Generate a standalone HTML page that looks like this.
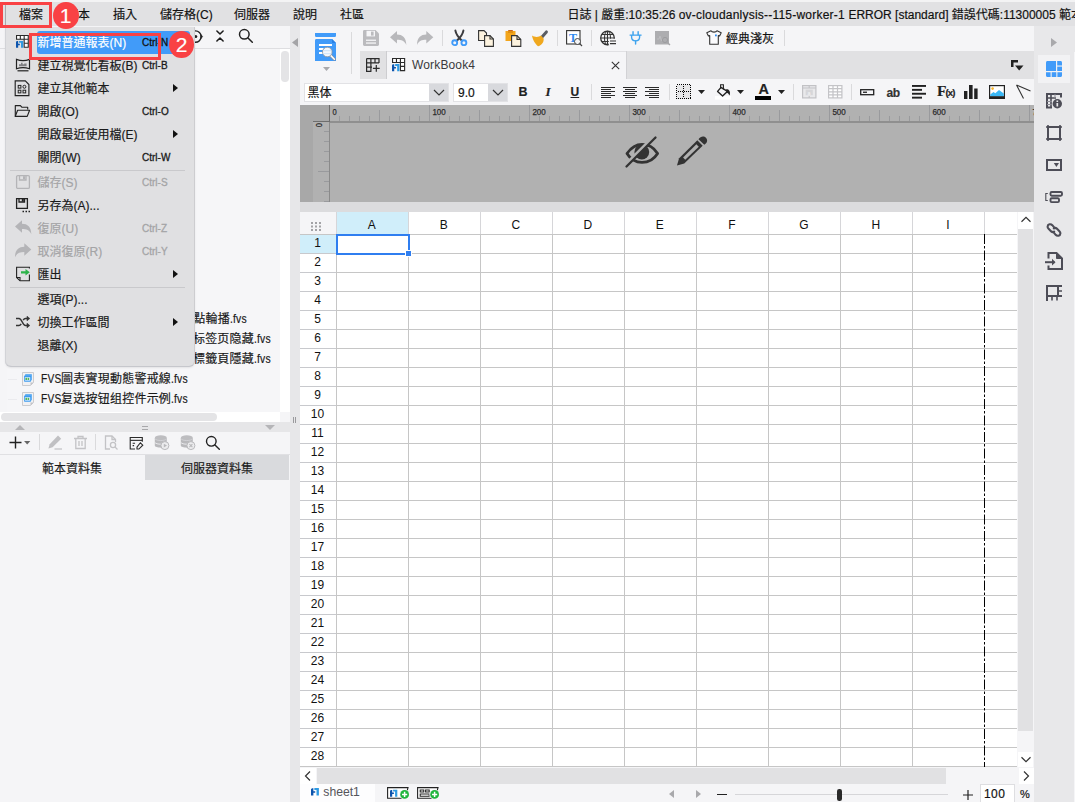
<!DOCTYPE html>
<html lang="zh-Hant">
<head>
<meta charset="utf-8">
<title>FineReport Designer</title>
<style>
*{box-sizing:border-box;margin:0;padding:0}
html,body{width:1075px;height:802px;overflow:hidden;background:#f5f5f7}
body{position:relative;font-family:"Liberation Sans","Noto Sans CJK TC",sans-serif;font-size:12px;color:#1a1a1a}
.a{position:absolute}
.t{position:absolute;white-space:nowrap;line-height:16px;height:16px;-webkit-text-stroke:.18px}
svg{position:absolute;overflow:visible}
/* menubar */
#topstrip{left:0;top:0;width:1075px;height:2px;background:#f3f3f4}
#menubar{left:0;top:2px;width:1075px;height:24px;background:#e1e1e3}
#menubar .t{top:4.5px;color:#111}
/* left panel */
#left{left:0;top:26px;width:290px;height:776px;background:#f5f5f7}
#gutter{left:290px;top:26px;width:10px;height:776px;background:#e7e7e9}
/* menu */
#menu{left:5px;top:27px;width:190px;height:340px;background:#e0e0e2;border-radius:0 0 6px 6px;border-right:1px solid #cdcdd0;border-bottom:1px solid #c6c7cc;box-shadow:inset 1px 0 0 #d2d3d7,0 1px 2px rgba(0,0,0,.08)}
.mi{position:absolute;left:0;width:190px;height:23px}
.mi .t{left:32.5px;top:4px}
.mi .k{left:137px;font-size:10px;top:4px;-webkit-text-stroke:.3px}
.mi .ar{position:absolute;left:168px;top:7px;width:0;height:0;border-left:5px solid #111;border-top:4.5px solid transparent;border-bottom:4.5px solid transparent}
.mi.dis{color:#a4a4a6}
.sep{position:absolute;left:5px;width:175px;height:1px;background:#c9c9cc}
/* main */
#main{left:300px;top:26px;width:734px;height:776px;background:#f5f5f7}
#side{left:1034px;top:26px;width:41px;height:776px;background:#e8e8ea}
.n,.n2{display:inline-block;transform-origin:0 50%}.n{transform:scaleX(.85);margin-right:-3.4px}.n2{transform:scaleX(.86);margin-right:-2.6px}
.vs{position:absolute;width:1px;background:#dadadc}
</style>
</head>
<body>
<div class="a" id="topstrip"></div>
<div class="a" id="menubar">
  <i class="a" style="left:5px;top:2px;width:1px;height:22px;background:#a9a9ac"></i><span class="t" style="left:19px">檔案</span>
  <span class="t" style="left:66px">範本</span>
  <span class="t" style="left:113px">插入</span>
  <span class="t" style="left:160px">儲存格(C)</span>
  <span class="t" style="left:234px">伺服器</span>
  <span class="t" style="left:293px">說明</span>
  <span class="t" style="left:340px">社區</span>
  <span class="t" style="left:567.5px">日誌 | 嚴重:10:35:26 <span style="letter-spacing:.22px">ov-cloudanlysis--115-worker-1 </span>ERROR [standard] 錯誤代碼:11300005 範本</span>
</div>

<div class="a" id="left">
  <!-- top toolbar (mostly hidden beneath menu) -->
  <div class="a" style="left:0;top:22px;width:290px;height:1px;background:#dedee1"></div>
  <svg style="left:186px;top:3px" width="18" height="16" viewBox="0 0 18 16" fill="none" stroke="#222" stroke-width="1.4"><circle cx="9.4" cy="7.6" r="5.7"/><circle cx="9.8" cy="7.6" r="1.5" fill="#222" stroke="none"/><path d="M14.8 5.4L16.6 7.6L14.8 9.8Z" fill="#222" stroke-width=".6"/></svg>
  <svg style="left:215px;top:3px" width="10" height="14" viewBox="0 0 10 14" fill="none" stroke="#1c1c1c" stroke-width="1.55" stroke-linecap="round" stroke-linejoin="round"><path d="M1.9 2 L5 5 L8.1 2"/><path d="M1.9 12 L5 9 L8.1 12"/></svg>
  <svg style="left:238px;top:2px" width="16" height="16" viewBox="0 0 16 16" fill="none" stroke="#222" stroke-width="1.5" stroke-linecap="round"><circle cx="6.3" cy="6.3" r="4.8"/><path d="M10 10 L14.3 14.3"/></svg>
  <!-- tree area -->
  <div class="a" style="left:7px;top:23px;width:273px;height:363px;background:#f6f6f8"></div>
  <div class="a" style="left:280px;top:23px;width:10px;height:363px;background:#fff"></div>
  <div class="a" style="left:281.3px;top:24.5px;width:7.5px;height:31.5px;background:#e4e4e6;border-radius:3.7px"></div>
  <!-- tree rows -->
  <div class="t" style="right:43px;top:285px;letter-spacing:.22px"><span class="n">FVS</span>焦點輪播<span class="n2">.fvs</span></div>
  <div class="t" style="right:19px;top:305px;letter-spacing:.22px"><span class="n">FVS</span>标签页隐藏<span class="n2">.fvs</span></div>
  <div class="t" style="right:19px;top:325px;letter-spacing:.22px"><span class="n">FVS</span>標籤頁隱藏<span class="n2">.fvs</span></div>
  <svg style="left:22px;top:346px" width="12" height="14" viewBox="0 0 12 14"><path d="M.5 .5H11.5V10.5L8.5 13.5H.5Z" fill="#f1f1f3" stroke="#cbcbce"/><path d="M8.5 13.5V10.5H11.5Z" fill="#c4c4c7"/><rect x="3" y="2" width="7" height="6.5" rx=".8" fill="#67b1f3"/><rect x="2" y="3.6" width="7" height="6.2" rx=".8" fill="#3f9cf0"/><rect x="2.8" y="5.2" width="5.4" height="3.4" fill="#e4f1fc"/><rect x="3.4" y="5.8" width="1.6" height="2.2" fill="#4fb45f"/><rect x="5.6" y="5.8" width="1.6" height="2.2" fill="#4fb45f"/></svg>
  <div class="t" style="left:40.5px;top:345px;letter-spacing:.22px"><span class="n">FVS</span>圖表實現動態警戒線<span class="n2">.fvs</span></div>
  <svg style="left:22px;top:366px" width="12" height="14" viewBox="0 0 12 14"><path d="M.5 .5H11.5V10.5L8.5 13.5H.5Z" fill="#f1f1f3" stroke="#cbcbce"/><path d="M8.5 13.5V10.5H11.5Z" fill="#c4c4c7"/><rect x="3" y="2" width="7" height="6.5" rx=".8" fill="#67b1f3"/><rect x="2" y="3.6" width="7" height="6.2" rx=".8" fill="#3f9cf0"/><rect x="2.8" y="5.2" width="5.4" height="3.4" fill="#e4f1fc"/><rect x="3.4" y="5.8" width="1.6" height="2.2" fill="#4fb45f"/><rect x="5.6" y="5.8" width="1.6" height="2.2" fill="#4fb45f"/></svg>
  <div class="t" style="left:40.5px;top:365px;letter-spacing:.22px"><span class="n">FVS</span>复选按钮组控件示例<span class="n2">.fvs</span></div>
  <div class="a" style="left:8px;top:353px;width:9px;height:1px;background:#ebebee"></div><div class="a" style="left:8px;top:373px;width:9px;height:1px;background:#ebebee"></div>
  <!-- h scrollbar -->
  <div class="a" style="left:0;top:386px;width:280px;height:10px;background:#fff"></div>
  <div class="a" style="left:1px;top:387px;width:216px;height:8px;background:#e4e4e6;border-radius:4px"></div>
  <!-- splitter -->
  <div class="a" style="left:0;top:396px;width:290px;height:10px;background:#e6e6e8"></div>
  <svg style="left:15px;top:399px" width="10" height="5" viewBox="0 0 10 5"><path d="M0 5L5 0L10 5Z" fill="#b5b5b8"/></svg>
  <svg style="left:265px;top:399px" width="10" height="5" viewBox="0 0 10 5"><path d="M0 0L5 5L10 0Z" fill="#b5b5b8"/></svg>
  <div class="a" style="left:142px;top:400px;width:6px;height:1px;background:#a8a8ab"></div>
  <div class="a" style="left:142px;top:403px;width:6px;height:1px;background:#a8a8ab"></div>
  <!-- dataset toolbar -->
  <svg style="left:9px;top:410px" width="13" height="13" viewBox="0 0 13 13" stroke="#222" stroke-width="1.4"><path d="M6.5 .5V12.5M.5 6.5H12.5"/></svg>
  <svg style="left:24px;top:414.5px" width="6.4" height="3.6" viewBox="0 0 7 4"><path d="M0 0H7L3.5 4Z" fill="#666"/></svg>
  <div class="vs" style="left:39px;top:408px;height:16px"></div>
  <svg style="left:48px;top:409px" width="15" height="15" viewBox="0 0 15 15" fill="#c0c0c3"><path d="M10 .5 L13.2 3.7 L4.6 12.3 L.4 13.6 L1.7 9.2Z"/><rect x="6.5" y="13.4" width="7.5" height="1.2"/></svg>
  <svg style="left:73px;top:409px" width="15" height="15" viewBox="0 0 15 15" fill="none" stroke="#c3c3c6" stroke-width="1.3"><path d="M1 3.5H14M5 3.5V1.5H10V3.5M2.8 3.5V13.5H12.2V3.5M6 6V11M9 6V11"/></svg>
  <div class="vs" style="left:95px;top:408px;height:16px"></div>
  <svg style="left:104px;top:409px" width="15" height="15" viewBox="0 0 15 15" fill="none" stroke="#c3c3c6" stroke-width="1.3"><path d="M11.5 7V4.5L8 1H1.5V14H6"/><path d="M8 1V4.5H11.5"/><circle cx="9" cy="10" r="2.6"/><path d="M11 12L13.5 14.5"/></svg>
  <svg style="left:129px;top:409.5px" width="15" height="14.5" viewBox="0 0 15 15" fill="none" stroke="#2a2a2a" stroke-width="1.15"><path d="M13.5 6V1.5H1V13.5H6"/><path d="M1 4.5H13.5"/><path d="M3.5 7.5H6M3.5 10H5"/><path d="M8 11.5 L11.5 7 L14 9.5 L10 13.5H8Z"/></svg>
  <svg style="left:154px;top:409px" width="16" height="16" viewBox="0 0 16 16"><path d="M.8 3V10.6C.8 13.4 12.8 13.4 12.8 10.6V3Z" fill="#b9b9bc"/><ellipse cx="6.8" cy="3" rx="6" ry="2.7" fill="#bdbdc0"/><path d="M.8 3.6C2.4 6.2 11.2 6.2 12.8 3.6" stroke="#d6d6d9" stroke-width=".8" fill="none"/><path d="M.8 7.4C2.4 9.8 11.2 9.8 12.8 7.4" stroke="#ededf0" stroke-width=".9" fill="none"/><circle cx="10.9" cy="10.6" r="4" fill="#ececee" stroke="#b9b9bc" stroke-width="1"/><path d="M9.8 8.7L13 10.6L9.8 12.5Z" fill="#b9b9bc"/></svg>
  <svg style="left:180px;top:409px" width="16" height="16" viewBox="0 0 16 16"><path d="M.8 3V10.6C.8 13.4 12.8 13.4 12.8 10.6V3Z" fill="#b9b9bc"/><ellipse cx="6.8" cy="3" rx="6" ry="2.7" fill="#bdbdc0"/><path d="M.8 3.6C2.4 6.2 11.2 6.2 12.8 3.6" stroke="#d6d6d9" stroke-width=".8" fill="none"/><path d="M.8 7.4C2.4 9.8 11.2 9.8 12.8 7.4" stroke="#ededf0" stroke-width=".9" fill="none"/><circle cx="10.9" cy="10.6" r="4" fill="#ececee" stroke="#b9b9bc" stroke-width="1"/><path d="M9.4 9.1L12.4 12.1M12.4 9.1L9.4 12.1" stroke="#b9b9bc" stroke-width="1.1"/></svg>
  <svg style="left:205px;top:409px" width="16" height="16" viewBox="0 0 16 16" fill="none" stroke="#222" stroke-width="1.4" stroke-linecap="round"><circle cx="6.3" cy="6.3" r="4.8"/><path d="M10 10 L14.3 14.3"/></svg>
  <div class="a" style="left:0;top:428px;width:290px;height:1px;background:#e0e0e3"></div>
  <!-- tabs -->
  <div class="a" style="left:145px;top:429px;width:144px;height:25px;background:#d9dadd"></div>
  <div class="t" style="left:42px;top:435px">範本資料集</div>
  <div class="t" style="left:181px;top:435px">伺服器資料集</div>
</div>
<div class="a" id="gutter">
  <svg style="left:2px;top:12px" width="6" height="9" viewBox="0 0 6 9"><path d="M6 0V9L0 4.5Z" fill="#a4a4a7"/></svg>
  <div class="a" style="left:3px;top:391px;width:1px;height:6px;background:#9a9a9d"></div>
  <div class="a" style="left:5px;top:391px;width:1px;height:6px;background:#9a9a9d"></div>
</div>
<div class="a" id="main">
<!--M1-->
<svg style="left:15px;top:7px" width="22" height="29" viewBox="0 0 22 29" ><path d="M0 0H21V2.4C21 3.4 20.3 4 19.4 4H1.6C.7 4 0 3.4 0 2.4Z" fill="#419bf9"/><path d="M1.4 6H17L21 10V28H0V7.4C0 6.6 .6 6 1.4 6Z" fill="#419bf9"/><path d="M17 6V10H21Z" fill="#2a82e6"/><rect x="4" y="11" width="13" height="2" fill="#fff"/><rect x="4" y="15" width="4.5" height="2" fill="#fff"/><rect x="4" y="19" width="4" height="2" fill="#fff"/><path d="M15.6 22.4L19.4 26.2" stroke="#909095" stroke-width="2.8" stroke-linecap="round"/><path d="M15.6 22.4L19.4 26.2" stroke="#fff" stroke-width="1.5" stroke-linecap="round"/><circle cx="12.3" cy="19" r="4.8" fill="#f4f8fd" stroke="#8f9399" stroke-width=".8"/><path d="M8.3 17.6H16.3M8.3 20.6H16.3" stroke="#d4e6f9" stroke-width="1.3"/></svg>
<svg style="left:23px;top:41px" width="7" height="4" viewBox="0 0 7 4" ><path d="M0 0H7L3.5 4Z" fill="#a9a9ac"/></svg>
<div class="vs" style="left:51px;top:6px;height:42px"></div>
<svg style="left:63px;top:4px" width="16" height="16" viewBox="0 0 16 16" ><path d="M0 1.4C0 .6 .6 0 1.4 0H12.5L16 3.5V14.6C16 15.4 15.4 16 14.6 16H1.4C.6 16 0 15.4 0 14.6Z" fill="#bbbbbe"/><rect x="3.5" y=".8" width="8.5" height="5.6" fill="#f5f5f7"/><rect x="8" y="1.6" width="2.6" height="4" fill="#bbbbbe"/><rect x="3" y="9.6" width="10" height="1.3" fill="#f5f5f7"/><rect x="3" y="12.4" width="10" height="1.3" fill="#f5f5f7"/></svg>
<svg style="left:90px;top:4.5px" width="16.5" height="14" viewBox="0 0 16.5 14" ><path d="M7 0V3.6C12.5 3.6 16.3 6.8 16.3 14C14.6 10 11.5 8.8 7 8.8V12.6L0 6.3Z" fill="#b8b8bb"/></svg>
<svg style="left:116.5px;top:4.5px" width="16.5" height="14" viewBox="0 0 16.5 14" ><path d="M9.3 0V3.6C3.8 3.6 0 6.8 0 14C1.7 10 4.8 8.8 9.3 8.8V12.6L16.3 6.3Z" fill="#b8b8bb"/></svg>
<div class="vs" style="left:142px;top:4px;height:16px"></div>
<svg style="left:151px;top:4px" width="17" height="16.5" viewBox="0 0 17 16.5" ><path d="M4.4 .6C5 4 7.5 7.5 10.8 10.6M12.4 .6C11.8 4 9.3 7.5 6 10.6" stroke="#3c3c3f" stroke-width="2" fill="none" stroke-linecap="round"/><circle cx="3.7" cy="12.7" r="2.45" fill="none" stroke="#419bf9" stroke-width="1.9"/><circle cx="12.9" cy="12.7" r="2.45" fill="none" stroke="#419bf9" stroke-width="1.9"/></svg>
<svg style="left:178px;top:4px" width="16" height="17" viewBox="0 0 16 17" ><path d="M.6 .6H6L8.5 3V10.5H.6Z" fill="#fdf3df" stroke="#333" stroke-width="1.1"/><path d="M6.6 5.6H12L15.4 9V16.4H6.6Z" fill="#fdf3df" stroke="#333" stroke-width="1.1"/><path d="M12 5.6V9H15.4" fill="none" stroke="#333" stroke-width="1.1"/></svg>
<svg style="left:205px;top:3px" width="17" height="18" viewBox="0 0 17 18" ><path d="M.5 2H10.5V12H.5Z" fill="#f3a51c"/><rect x="3.2" y="1" width="4.6" height="1.3" fill="#c8641a"/><rect x="3" y="2.6" width="5" height="1.2" fill="#d98b0c"/><path d="M6.6 6.6H12L15.8 10.4V17.4H6.6Z" fill="#fdf3df" stroke="#333" stroke-width="1.1"/><path d="M12 6.6V10.4H15.8" fill="none" stroke="#333" stroke-width="1.1"/></svg>
<svg style="left:232px;top:4px" width="17" height="17" viewBox="0 0 17 17" ><path d="M10 7L14.4 1.9" stroke="#5a5d63" stroke-width="3" stroke-linecap="round"/><path d="M0 5.5C3 7.6 7 7.2 9 5.6L11.6 8.4C12.2 12 9.2 15.6 6 16.2C3 14 .6 9.2 0 5.5Z" fill="#f0a81e"/></svg>
<div class="vs" style="left:257px;top:4px;height:16px"></div>
<svg style="left:266px;top:4px" width="17" height="17" viewBox="0 0 17 17" ><rect x=".6" y=".6" width="13.4" height="13.4" fill="#fff" stroke="#333" stroke-width="1.1"/><text x="3" y="11.5" font-family="Liberation Serif,serif" font-size="12" font-weight="bold" fill="#2f8bf0">T</text><circle cx="11.5" cy="11.5" r="3" fill="#f5f5f7" stroke="#444" stroke-width="1"/><path d="M13.7 13.7L16 16" stroke="#444" stroke-width="1.2"/></svg>
<div class="vs" style="left:291px;top:4px;height:16px"></div>
<svg style="left:300px;top:4px" width="17" height="16" viewBox="0 0 17 16" ><circle cx="7.5" cy="8" r="6.8" fill="none" stroke="#333" stroke-width="1.3"/><ellipse cx="7.5" cy="8" rx="3" ry="6.8" fill="none" stroke="#333" stroke-width="1.1"/><path d="M.8 8H14.2M1.8 4.5H13.2M1.8 11.5H9M7.5 1.2V14.8" stroke="#333" stroke-width="1.1"/><rect x="8.8" y="8.8" width="8" height="7" fill="#f5f5f7"/><path d="M10 11H16M10 13.6H16" stroke="#333" stroke-width="1.2"/></svg>
<svg style="left:328.5px;top:5.3px" width="13.2" height="13.6" viewBox="0 0 15 16" ><path d="M4.5 .8V4.5M10.5 .8V4.5" stroke="#3ea3ee" stroke-width="1.7" stroke-linecap="round"/><path d="M1 4.8H14M2.8 5V7.5C2.8 13 12.2 13 12.2 7.5V5" fill="none" stroke="#3ea3ee" stroke-width="1.6" stroke-linecap="round"/><path d="M7.5 11.8V15.3" stroke="#3ea3ee" stroke-width="1.7" stroke-linecap="round"/></svg>
<svg style="left:355px;top:5px" width="16" height="15" viewBox="0 0 16 15" ><rect x="0" y="0" width="14" height="13.5" fill="#adadb0"/><path d="M2 8H4L5 5L6.5 10L7.5 7" stroke="#bdbdc0" stroke-width="1" fill="none"/><circle cx="10" cy="9" r="2.6" fill="none" stroke="#9c9c9f" stroke-width="1"/><path d="M12 11L15 14" stroke="#a6a6a9" stroke-width="1.2"/></svg>
<svg style="left:406px;top:4px" width="16" height="15" viewBox="0 0 16 15" ><path d="M5 .8C6 2.6 10 2.6 11 .8L15.2 2.8L13.6 6L12.3 5.5V14.2H3.7V5.5L2.4 6L.8 2.8Z" fill="#fafafc" stroke="#333" stroke-width="1.1" stroke-linejoin="round"/><rect x="9" y="4.5" width="1.8" height="1.8" fill="#2f8bf0"/></svg>
<div class="t" style="left:426px;top:4.5px;color:#111">經典淺灰</div>
<div class="vs" style="left:484px;top:4px;height:16px"></div>
<div class="a" style="left:60px;top:25px;width:674px;height:28px;background:#e1e1e3"></div>
<div class="a" style="left:87px;top:25px;width:239px;height:28px;background:#f5f5f7"></div>
<div class="a" style="left:326px;top:25px;width:1px;height:28px;background:#d2d2d5"></div>
<div class="a" style="left:86px;top:25px;width:1px;height:28px;background:#cdcdd0"></div>
<div class="a" style="left:87px;top:25px;width:239px;height:1px;background:#e0e0e3"></div>
<svg style="left:66px;top:32px" width="15" height="15" viewBox="0 0 15 15" ><path d="M.6 .6H13V5M.6 .6V13.4H5.4M.6 4.9H13M.6 9.2H5.2M4.9 .6V13.4M9 .6V5.2M4.9 9.2H6" fill="none" stroke="#2a2a2a" stroke-width="1.2"/><path d="M10.3 7V13.8M6.9 10.4H13.7" stroke="#2a2a2a" stroke-width="1.2"/></svg>
<svg style="left:92px;top:32.2px" width="13.2" height="13.2" viewBox="0 0 13 13" ><path d="M.55 .55H12.45V12.45H8.3V4.4H.55Z" fill="#fff" stroke="#2a2a2a" stroke-width="1.1"/><path d="M4.4 .55V4.4M8.3 .55V4.4M8.3 4.4H12.45M8.3 8.3H12.45" fill="none" stroke="#2a2a2a" stroke-width="1.1"/><path d="M0 7.6C0 6.7 .7 6.2 1.6 6.2H2.2V8.9H3.9V10.3H2.2V13H0Z" fill="#0d54ad"/><path d="M3.1 6H7.3V13H5.1V7.9H3.1Z" fill="#2e9ae2"/></svg>
<div class="t" style="left:112px;top:31px;color:#3a3a3d;font-size:12px;letter-spacing:.15px;-webkit-text-stroke:0">WorkBook4</div>
<svg style="left:310.7px;top:34.5px" width="9" height="9" viewBox="0 0 9 9" ><path d="M.8 .8L8.2 8.2M8.2 .8L.8 8.2" stroke="#333" stroke-width="1.1"/></svg>
<svg style="left:711px;top:34px" width="13" height="11" viewBox="0 0 13 11" ><path d="M0 0H7V2.5H2.5V7H0Z" fill="#222"/><path d="M4 5.5H12.5L8.2 10.5Z" fill="#222"/></svg>
<div class="a" style="left:4px;top:56.6px;width:145px;height:19px;background:#d8d9dd;border:1px solid #e2e2e5"></div>
<div class="a" style="left:5px;top:57.6px;width:124px;height:17px;background:#fff"></div>
<div class="t" style="left:7.5px;top:58.5px;color:#111">黑体</div>
<svg style="left:133px;top:63px" width="12" height="7" viewBox="0 0 12 7" ><path d="M1 1L6 6L11 1" fill="none" stroke="#333" stroke-width="1.2"/></svg>
<div class="a" style="left:153px;top:56.6px;width:55px;height:19px;background:#d8d9dd;border:1px solid #e2e2e5"></div>
<div class="a" style="left:154px;top:57.6px;width:34px;height:17px;background:#fff"></div>
<div class="t" style="left:158px;top:58.5px;color:#111">9.0</div>
<svg style="left:192px;top:63px" width="12" height="7" viewBox="0 0 12 7" ><path d="M1 1L6 6L11 1" fill="none" stroke="#333" stroke-width="1.2"/></svg>
<div class="t" style="left:218.5px;top:58px;font-weight:bold;color:#222;font-size:12.5px">B</div>
<div class="t" style="left:245.5px;top:58px;font-style:italic;font-weight:bold;color:#222;font-family:Liberation Serif,serif;font-size:13px">I</div>
<div class="t" style="left:270.5px;top:57.5px;font-weight:bold;color:#222;text-decoration:underline;font-size:12px">U</div>
<div class="vs" style="left:291px;top:58px;height:16px"></div>
<svg style="left:301px;top:61px" width="14" height="11" viewBox="0 0 14 11" shape-rendering="crispEdges"><rect x="0" y="0" width="14" height="1" fill="#2a2a2a"/><rect x="0" y="2" width="10" height="1" fill="#2a2a2a"/><rect x="0" y="4" width="14" height="1" fill="#2a2a2a"/><rect x="0" y="6" width="10" height="1" fill="#2a2a2a"/><rect x="0" y="8" width="14" height="1" fill="#2a2a2a"/><rect x="0" y="10" width="10" height="1" fill="#2a2a2a"/></svg>
<svg style="left:323px;top:61px" width="14" height="11" viewBox="0 0 14 11" shape-rendering="crispEdges"><rect x="0" y="0" width="14" height="1" fill="#2a2a2a"/><rect x="2" y="2" width="10" height="1" fill="#2a2a2a"/><rect x="0" y="4" width="14" height="1" fill="#2a2a2a"/><rect x="2" y="6" width="10" height="1" fill="#2a2a2a"/><rect x="0" y="8" width="14" height="1" fill="#2a2a2a"/><rect x="2" y="10" width="10" height="1" fill="#2a2a2a"/></svg>
<svg style="left:345px;top:61px" width="14" height="11" viewBox="0 0 14 11" shape-rendering="crispEdges"><rect x="0" y="0" width="14" height="1" fill="#2a2a2a"/><rect x="4" y="2" width="10" height="1" fill="#2a2a2a"/><rect x="0" y="4" width="14" height="1" fill="#2a2a2a"/><rect x="4" y="6" width="10" height="1" fill="#2a2a2a"/><rect x="0" y="8" width="14" height="1" fill="#2a2a2a"/><rect x="4" y="10" width="10" height="1" fill="#2a2a2a"/></svg>
<div class="vs" style="left:369px;top:58px;height:16px"></div>
<svg style="left:376px;top:58px" width="15" height="15" viewBox="0 0 15 15" shape-rendering="crispEdges"><rect x=".5" y=".5" width="14" height="14" fill="#e6e6e8" stroke="#000" stroke-width="1" stroke-dasharray="1 1"/><path d="M7.5 2V14M2 7.5H14" stroke="#000" stroke-width="1" stroke-dasharray="1 1"/></svg>
<svg style="left:398px;top:64px" width="7" height="4" viewBox="0 0 7 4" ><path d="M0 0H7L3.5 4Z" fill="#222"/></svg>
<svg style="left:415px;top:58px" width="17" height="16" viewBox="0 0 17 16" ><rect x="0" y="12" width="16" height="3.6" fill="#fff"/><path d="M6 3.4L12.4 7.4L7.6 12L2.6 7.4Z" fill="none" stroke="#222" stroke-width="1.4" stroke-linejoin="round"/><path d="M5.6 4.6V.8H8.4V5.4" fill="none" stroke="#222" stroke-width="1.1"/><path d="M11.2 5C14.4 5 15.8 8 14.6 11.6C13.6 9.6 12.8 8.8 11.6 8.4Z" fill="#222"/></svg>
<svg style="left:437px;top:64px" width="7" height="4" viewBox="0 0 7 4" ><path d="M0 0H7L3.5 4Z" fill="#222"/></svg>
<div class="t" style="left:458.4px;top:54.9px;font-weight:bold;font-size:14.4px;color:#222">A</div>
<div class="a" style="left:455px;top:70px;width:16px;height:4px;background:#000"></div>
<svg style="left:478px;top:64px" width="7" height="4" viewBox="0 0 7 4" ><path d="M0 0H7L3.5 4Z" fill="#222"/></svg>
<div class="vs" style="left:493px;top:58px;height:16px"></div>
<svg style="left:502px;top:59px" width="15" height="14" viewBox="0 0 15 14" ><rect x=".6" y=".6" width="13.3" height="12.3" fill="#e9e9eb" stroke="#c2c2c5" stroke-width="1.2"/><path d="M.6 3H14M7.2 .6V3M7.2 11V13" stroke="#c2c2c5" stroke-width="1.1"/><rect x="3.6" y="4.6" width="7.2" height="5.6" fill="#d6d6d9"/><text x="5.4" y="9.6" font-size="5.5" fill="#f5f5f7" font-family="Liberation Sans,sans-serif">a</text></svg>
<svg style="left:528px;top:59px" width="15" height="14" viewBox="0 0 15 14" ><rect x=".6" y=".6" width="13.3" height="12.3" fill="#fff" stroke="#c4c4c7" stroke-width="1.2"/><path d="M.6 3.7H14M.6 6.8H14M.6 9.9H14M5 .6V13M9.5 .6V13" fill="none" stroke="#c4c4c7" stroke-width="1.2"/></svg>
<div class="vs" style="left:551px;top:58px;height:16px"></div>
<svg style="left:560px;top:63px" width="15" height="7" viewBox="0 0 15 7" ><rect x=".7" y=".7" width="13" height="5" fill="none" stroke="#222" stroke-width="1.3"/><rect x="3" y="2.6" width="4" height="1.3" fill="#222"/></svg>
<div class="t" style="left:586.5px;top:59px;font-weight:bold;color:#333;font-size:12px;letter-spacing:-.3px">ab</div>
<svg style="left:612px;top:59.3px" width="14" height="14" viewBox="0 0 14 14" ><rect x="0" y="0" width="14" height="1.9" fill="#222"/><rect x="0" y="3.9" width="10" height="1.9" fill="#222"/><rect x="0" y="7.8" width="14" height="1.9" fill="#222"/><rect x="0" y="11.7" width="10" height="1.9" fill="#222"/></svg>
<div class="t" style="left:637px;top:56.8px;font-family:Liberation Serif,serif;font-size:15.5px;font-weight:bold;color:#222">F</div>
<div class="t" style="left:645.6px;top:58.8px;font-family:Liberation Sans,sans-serif;font-size:9.5px;font-weight:bold;color:#222;letter-spacing:-.9px">(x)</div>
<svg style="left:664px;top:59px" width="14" height="14" viewBox="0 0 14 14" ><rect x="0" y="6" width="3.4" height="8" fill="#222"/><rect x="5" y="0" width="3.6" height="14" fill="#222"/><rect x="10.2" y="3.5" width="3.4" height="10.5" fill="#222"/></svg>
<svg style="left:689px;top:59px" width="16" height="14" viewBox="0 0 16 14" ><rect x=".6" y=".6" width="14.8" height="12.8" fill="#fff" stroke="#222" stroke-width="1.2"/><path d="M1.2 11.4V9.5L4.5 7L6.3 8.2L10 5L14.8 8.6V11.4Z" fill="#3ab8f6"/><rect x=".6" y="11.2" width="14.8" height="2.4" fill="#222"/><circle cx="3.6" cy="3.6" r="1.3" fill="#f8b62c"/></svg>
<svg style="left:716px;top:58px" width="15" height="15" viewBox="0 0 15 15" ><path d="M.5 1L14.5 7M.5 1L7.5 14.5" stroke="#333" stroke-width="1.1" fill="none"/></svg>
<div class="a" style="left:0px;top:79px;width:734px;height:97px;background:#b1b1b1"></div>
<div class="a" style="left:0px;top:79px;width:13px;height:97px;background:#a8a8a8"></div>
<div class="a" style="left:0px;top:79px;width:30px;height:16px;background:#a8a8a8"></div>
<div class="a" style="left:13px;top:95px;width:17px;height:1px;background:#6e6e6e"></div>
<div class="a" style="left:30px;top:95px;width:704px;height:2px;background:#8f8f8f"></div>
<div class="a" style="left:29px;top:96px;width:1px;height:80px;background:#8a8a8a"></div>
<div class="a" style="left:29px;top:79px;width:1px;height:17px;background:#6e6e6e"></div>
<svg style="left:0px;top:79px" width="734" height="97" viewBox="0 0 734 97" ><rect x="39" y="11" width="1" height="5" fill="#999a9d"/><rect x="49" y="11" width="1" height="5" fill="#999a9d"/><rect x="59" y="11" width="1" height="5" fill="#999a9d"/><rect x="69" y="11" width="1" height="5" fill="#999a9d"/><rect x="79" y="5" width="1" height="11" fill="#999a9d"/><rect x="89" y="11" width="1" height="5" fill="#999a9d"/><rect x="99" y="11" width="1" height="5" fill="#999a9d"/><rect x="109" y="11" width="1" height="5" fill="#999a9d"/><rect x="119" y="11" width="1" height="5" fill="#999a9d"/><rect x="129" y="0" width="1" height="16" fill="#999a9d"/><rect x="139" y="11" width="1" height="5" fill="#999a9d"/><rect x="149" y="11" width="1" height="5" fill="#999a9d"/><rect x="159" y="11" width="1" height="5" fill="#999a9d"/><rect x="169" y="11" width="1" height="5" fill="#999a9d"/><rect x="179" y="5" width="1" height="11" fill="#999a9d"/><rect x="189" y="11" width="1" height="5" fill="#999a9d"/><rect x="199" y="11" width="1" height="5" fill="#999a9d"/><rect x="209" y="11" width="1" height="5" fill="#999a9d"/><rect x="219" y="11" width="1" height="5" fill="#999a9d"/><rect x="229" y="0" width="1" height="16" fill="#999a9d"/><rect x="239" y="11" width="1" height="5" fill="#999a9d"/><rect x="249" y="11" width="1" height="5" fill="#999a9d"/><rect x="259" y="11" width="1" height="5" fill="#999a9d"/><rect x="269" y="11" width="1" height="5" fill="#999a9d"/><rect x="279" y="5" width="1" height="11" fill="#999a9d"/><rect x="289" y="11" width="1" height="5" fill="#999a9d"/><rect x="299" y="11" width="1" height="5" fill="#999a9d"/><rect x="309" y="11" width="1" height="5" fill="#999a9d"/><rect x="319" y="11" width="1" height="5" fill="#999a9d"/><rect x="329" y="0" width="1" height="16" fill="#999a9d"/><rect x="339" y="11" width="1" height="5" fill="#999a9d"/><rect x="349" y="11" width="1" height="5" fill="#999a9d"/><rect x="359" y="11" width="1" height="5" fill="#999a9d"/><rect x="369" y="11" width="1" height="5" fill="#999a9d"/><rect x="379" y="5" width="1" height="11" fill="#999a9d"/><rect x="389" y="11" width="1" height="5" fill="#999a9d"/><rect x="399" y="11" width="1" height="5" fill="#999a9d"/><rect x="409" y="11" width="1" height="5" fill="#999a9d"/><rect x="419" y="11" width="1" height="5" fill="#999a9d"/><rect x="429" y="0" width="1" height="16" fill="#999a9d"/><rect x="439" y="11" width="1" height="5" fill="#999a9d"/><rect x="449" y="11" width="1" height="5" fill="#999a9d"/><rect x="459" y="11" width="1" height="5" fill="#999a9d"/><rect x="469" y="11" width="1" height="5" fill="#999a9d"/><rect x="479" y="5" width="1" height="11" fill="#999a9d"/><rect x="489" y="11" width="1" height="5" fill="#999a9d"/><rect x="499" y="11" width="1" height="5" fill="#999a9d"/><rect x="509" y="11" width="1" height="5" fill="#999a9d"/><rect x="519" y="11" width="1" height="5" fill="#999a9d"/><rect x="529" y="0" width="1" height="16" fill="#999a9d"/><rect x="539" y="11" width="1" height="5" fill="#999a9d"/><rect x="549" y="11" width="1" height="5" fill="#999a9d"/><rect x="559" y="11" width="1" height="5" fill="#999a9d"/><rect x="569" y="11" width="1" height="5" fill="#999a9d"/><rect x="579" y="5" width="1" height="11" fill="#999a9d"/><rect x="589" y="11" width="1" height="5" fill="#999a9d"/><rect x="599" y="11" width="1" height="5" fill="#999a9d"/><rect x="609" y="11" width="1" height="5" fill="#999a9d"/><rect x="619" y="11" width="1" height="5" fill="#999a9d"/><rect x="629" y="0" width="1" height="16" fill="#999a9d"/><rect x="639" y="11" width="1" height="5" fill="#999a9d"/><rect x="649" y="11" width="1" height="5" fill="#999a9d"/><rect x="659" y="11" width="1" height="5" fill="#999a9d"/><rect x="669" y="11" width="1" height="5" fill="#999a9d"/><rect x="679" y="5" width="1" height="11" fill="#999a9d"/><rect x="689" y="11" width="1" height="5" fill="#999a9d"/><rect x="699" y="11" width="1" height="5" fill="#999a9d"/><rect x="709" y="11" width="1" height="5" fill="#999a9d"/><rect x="719" y="11" width="1" height="5" fill="#999a9d"/><rect x="729" y="0" width="1" height="16" fill="#999a9d"/><rect x="24" y="26" width="5" height="1" fill="#999a9d"/><rect x="24" y="36" width="5" height="1" fill="#999a9d"/><rect x="24" y="46" width="5" height="1" fill="#999a9d"/><rect x="24" y="56" width="5" height="1" fill="#999a9d"/><rect x="18" y="66" width="11" height="1" fill="#999a9d"/><rect x="24" y="76" width="5" height="1" fill="#999a9d"/><rect x="24" y="86" width="5" height="1" fill="#999a9d"/><rect x="24" y="96" width="5" height="1" fill="#999a9d"/><text x="32.4" y="9.9" font-size="9" fill="#2a2a2a" stroke="#2a2a2a" stroke-width=".25" textLength="4.2" lengthAdjust="spacingAndGlyphs" font-family="Liberation Sans,sans-serif">0</text><text x="132.4" y="9.9" font-size="9" fill="#2a2a2a" stroke="#2a2a2a" stroke-width=".25" textLength="13.4" lengthAdjust="spacingAndGlyphs" font-family="Liberation Sans,sans-serif">100</text><text x="232.4" y="9.9" font-size="9" fill="#2a2a2a" stroke="#2a2a2a" stroke-width=".25" textLength="13.4" lengthAdjust="spacingAndGlyphs" font-family="Liberation Sans,sans-serif">200</text><text x="332.4" y="9.9" font-size="9" fill="#2a2a2a" stroke="#2a2a2a" stroke-width=".25" textLength="13.4" lengthAdjust="spacingAndGlyphs" font-family="Liberation Sans,sans-serif">300</text><text x="432.4" y="9.9" font-size="9" fill="#2a2a2a" stroke="#2a2a2a" stroke-width=".25" textLength="13.4" lengthAdjust="spacingAndGlyphs" font-family="Liberation Sans,sans-serif">400</text><text x="532.4" y="9.9" font-size="9" fill="#2a2a2a" stroke="#2a2a2a" stroke-width=".25" textLength="13.4" lengthAdjust="spacingAndGlyphs" font-family="Liberation Sans,sans-serif">500</text><text x="632.4" y="9.9" font-size="9" fill="#2a2a2a" stroke="#2a2a2a" stroke-width=".25" textLength="13.4" lengthAdjust="spacingAndGlyphs" font-family="Liberation Sans,sans-serif">600</text><text x="732.4" y="9.9" font-size="9" fill="#2a2a2a" stroke="#2a2a2a" stroke-width=".25" textLength="13.4" lengthAdjust="spacingAndGlyphs" font-family="Liberation Sans,sans-serif">700</text><text transform="translate(22.1,22.2) rotate(-90)" font-size="9" fill="#2a2a2a" stroke="#2a2a2a" stroke-width=".25" textLength="4.2" lengthAdjust="spacingAndGlyphs" font-family="Liberation Sans,sans-serif">0</text></svg>
<svg style="left:324px;top:109px" width="36" height="34" viewBox="0 0 36 34" ><path d="M3 18.5C8 11.4 13.5 9.4 18 9.4C23 9.4 29.5 11.8 33.6 18.5C29.5 25.2 23 27.4 18 27.4C13 27.4 7 25.2 3 18.5Z" fill="none" stroke="#333" stroke-width="2.8" stroke-linejoin="round"/><circle cx="17.8" cy="17" r="7.4" fill="#333"/><path d="M30.2 1.2L1.2 30.2" stroke="#b1b1b1" stroke-width="3.2"/><path d="M31.5 2.5L2.5 31.5" stroke="#333" stroke-width="2.3" stroke-linecap="round"/></svg>
<svg style="left:376.3px;top:109.3px" width="32" height="32" viewBox="0 0 33 33" ><path d="M22 5.5L27.5 11L8.5 29.5L1 31.5L3.2 24Z" fill="#333"/><path d="M23.2 4.3C25.5 1 29 .8 31 3C33 5 32.2 8.2 29.2 10Z" fill="#333"/><path d="M21 9.5L23.5 12L9.5 25.5L7.3 23.3Z" fill="#b1b1b1"/></svg>
<div class="a" style="left:0px;top:176px;width:734px;height:10px;background:#dcdcde"></div>
<!--/M1-->
<!--M2-->
<div class="a" style="left:0px;top:186px;width:717px;height:555px;background:#fff"></div>
<div class="a" style="left:0px;top:186px;width:36px;height:22px;background:#f5f5f7"></div>
<div class="a" style="left:37px;top:186px;width:71px;height:22px;background:#d0eefa"></div>
<div class="a" style="left:0px;top:209px;width:36px;height:18px;background:#d0eefa"></div>
<svg style="left:0px;top:186px" width="717" height="555" viewBox="0 0 717 555" ><rect x="36" y="0" width="1" height="22" fill="#d6d6d9"/><rect x="108" y="0" width="1" height="22" fill="#d6d6d9"/><rect x="180" y="0" width="1" height="22" fill="#d6d6d9"/><rect x="252" y="0" width="1" height="22" fill="#d6d6d9"/><rect x="324" y="0" width="1" height="22" fill="#d6d6d9"/><rect x="396" y="0" width="1" height="22" fill="#d6d6d9"/><rect x="468" y="0" width="1" height="22" fill="#d6d6d9"/><rect x="540" y="0" width="1" height="22" fill="#d6d6d9"/><rect x="612" y="0" width="1" height="22" fill="#d6d6d9"/><rect x="684" y="0" width="1" height="22" fill="#d6d6d9"/><rect x="36" y="22" width="1" height="533" fill="#c6c6c6"/><rect x="108" y="22" width="1" height="533" fill="#c6c6c6"/><rect x="180" y="22" width="1" height="533" fill="#c6c6c6"/><rect x="252" y="22" width="1" height="533" fill="#c6c6c6"/><rect x="324" y="22" width="1" height="533" fill="#c6c6c6"/><rect x="396" y="22" width="1" height="533" fill="#c6c6c6"/><rect x="468" y="22" width="1" height="533" fill="#c6c6c6"/><rect x="540" y="22" width="1" height="533" fill="#c6c6c6"/><rect x="612" y="22" width="1" height="533" fill="#c6c6c6"/><rect x="0" y="22" width="717" height="1" fill="#c6c6c6"/><rect x="36" y="41" width="681" height="1" fill="#c6c6c6"/><rect x="36" y="60" width="681" height="1" fill="#c6c6c6"/><rect x="36" y="79" width="681" height="1" fill="#c6c6c6"/><rect x="36" y="98" width="681" height="1" fill="#c6c6c6"/><rect x="36" y="117" width="681" height="1" fill="#c6c6c6"/><rect x="36" y="136" width="681" height="1" fill="#c6c6c6"/><rect x="36" y="155" width="681" height="1" fill="#c6c6c6"/><rect x="36" y="174" width="681" height="1" fill="#c6c6c6"/><rect x="36" y="193" width="681" height="1" fill="#c6c6c6"/><rect x="36" y="212" width="681" height="1" fill="#c6c6c6"/><rect x="36" y="231" width="681" height="1" fill="#c6c6c6"/><rect x="36" y="250" width="681" height="1" fill="#c6c6c6"/><rect x="36" y="269" width="681" height="1" fill="#c6c6c6"/><rect x="36" y="288" width="681" height="1" fill="#c6c6c6"/><rect x="36" y="307" width="681" height="1" fill="#c6c6c6"/><rect x="36" y="326" width="681" height="1" fill="#c6c6c6"/><rect x="36" y="345" width="681" height="1" fill="#c6c6c6"/><rect x="36" y="364" width="681" height="1" fill="#c6c6c6"/><rect x="36" y="383" width="681" height="1" fill="#c6c6c6"/><rect x="36" y="402" width="681" height="1" fill="#c6c6c6"/><rect x="36" y="421" width="681" height="1" fill="#c6c6c6"/><rect x="36" y="440" width="681" height="1" fill="#c6c6c6"/><rect x="36" y="459" width="681" height="1" fill="#c6c6c6"/><rect x="36" y="478" width="681" height="1" fill="#c6c6c6"/><rect x="36" y="497" width="681" height="1" fill="#c6c6c6"/><rect x="36" y="516" width="681" height="1" fill="#c6c6c6"/><rect x="36" y="535" width="681" height="1" fill="#c6c6c6"/><rect x="0" y="554" width="717" height="1" fill="#c6c6c6"/><rect x="0" y="41" width="36" height="1" fill="#c8c9cd"/><rect x="0" y="60" width="36" height="1" fill="#c8c9cd"/><rect x="0" y="79" width="36" height="1" fill="#c8c9cd"/><rect x="0" y="98" width="36" height="1" fill="#c8c9cd"/><rect x="0" y="117" width="36" height="1" fill="#c8c9cd"/><rect x="0" y="136" width="36" height="1" fill="#c8c9cd"/><rect x="0" y="155" width="36" height="1" fill="#c8c9cd"/><rect x="0" y="174" width="36" height="1" fill="#c8c9cd"/><rect x="0" y="193" width="36" height="1" fill="#c8c9cd"/><rect x="0" y="212" width="36" height="1" fill="#c8c9cd"/><rect x="0" y="231" width="36" height="1" fill="#c8c9cd"/><rect x="0" y="250" width="36" height="1" fill="#c8c9cd"/><rect x="0" y="269" width="36" height="1" fill="#c8c9cd"/><rect x="0" y="288" width="36" height="1" fill="#c8c9cd"/><rect x="0" y="307" width="36" height="1" fill="#c8c9cd"/><rect x="0" y="326" width="36" height="1" fill="#c8c9cd"/><rect x="0" y="345" width="36" height="1" fill="#c8c9cd"/><rect x="0" y="364" width="36" height="1" fill="#c8c9cd"/><rect x="0" y="383" width="36" height="1" fill="#c8c9cd"/><rect x="0" y="402" width="36" height="1" fill="#c8c9cd"/><rect x="0" y="421" width="36" height="1" fill="#c8c9cd"/><rect x="0" y="440" width="36" height="1" fill="#c8c9cd"/><rect x="0" y="459" width="36" height="1" fill="#c8c9cd"/><rect x="0" y="478" width="36" height="1" fill="#c8c9cd"/><rect x="0" y="497" width="36" height="1" fill="#c8c9cd"/><rect x="0" y="516" width="36" height="1" fill="#c8c9cd"/><rect x="0" y="535" width="36" height="1" fill="#c8c9cd"/><path d="M684.5 22V555" stroke="#000" stroke-width="1" stroke-dasharray="10 2 2.5 2" fill="none"/><text x="71.8" y="16.5" text-anchor="middle" font-size="12" fill="#111" font-family="Liberation Sans,sans-serif">A</text><text x="143.8" y="16.5" text-anchor="middle" font-size="12" fill="#111" font-family="Liberation Sans,sans-serif">B</text><text x="215.8" y="16.5" text-anchor="middle" font-size="12" fill="#111" font-family="Liberation Sans,sans-serif">C</text><text x="287.8" y="16.5" text-anchor="middle" font-size="12" fill="#111" font-family="Liberation Sans,sans-serif">D</text><text x="359.8" y="16.5" text-anchor="middle" font-size="12" fill="#111" font-family="Liberation Sans,sans-serif">E</text><text x="431.8" y="16.5" text-anchor="middle" font-size="12" fill="#111" font-family="Liberation Sans,sans-serif">F</text><text x="503.8" y="16.5" text-anchor="middle" font-size="12" fill="#111" font-family="Liberation Sans,sans-serif">G</text><text x="575.8" y="16.5" text-anchor="middle" font-size="12" fill="#111" font-family="Liberation Sans,sans-serif">H</text><text x="647.8" y="16.5" text-anchor="middle" font-size="12" fill="#111" font-family="Liberation Sans,sans-serif">I</text><text x="17.5" y="35.2" text-anchor="middle" font-size="12" fill="#111" font-family="Liberation Sans,sans-serif">1</text><text x="17.5" y="54.2" text-anchor="middle" font-size="12" fill="#111" font-family="Liberation Sans,sans-serif">2</text><text x="17.5" y="73.2" text-anchor="middle" font-size="12" fill="#111" font-family="Liberation Sans,sans-serif">3</text><text x="17.5" y="92.2" text-anchor="middle" font-size="12" fill="#111" font-family="Liberation Sans,sans-serif">4</text><text x="17.5" y="111.2" text-anchor="middle" font-size="12" fill="#111" font-family="Liberation Sans,sans-serif">5</text><text x="17.5" y="130.2" text-anchor="middle" font-size="12" fill="#111" font-family="Liberation Sans,sans-serif">6</text><text x="17.5" y="149.2" text-anchor="middle" font-size="12" fill="#111" font-family="Liberation Sans,sans-serif">7</text><text x="17.5" y="168.2" text-anchor="middle" font-size="12" fill="#111" font-family="Liberation Sans,sans-serif">8</text><text x="17.5" y="187.2" text-anchor="middle" font-size="12" fill="#111" font-family="Liberation Sans,sans-serif">9</text><text x="17.5" y="206.2" text-anchor="middle" font-size="12" fill="#111" font-family="Liberation Sans,sans-serif">10</text><text x="17.5" y="225.2" text-anchor="middle" font-size="12" fill="#111" font-family="Liberation Sans,sans-serif">11</text><text x="17.5" y="244.2" text-anchor="middle" font-size="12" fill="#111" font-family="Liberation Sans,sans-serif">12</text><text x="17.5" y="263.2" text-anchor="middle" font-size="12" fill="#111" font-family="Liberation Sans,sans-serif">13</text><text x="17.5" y="282.2" text-anchor="middle" font-size="12" fill="#111" font-family="Liberation Sans,sans-serif">14</text><text x="17.5" y="301.2" text-anchor="middle" font-size="12" fill="#111" font-family="Liberation Sans,sans-serif">15</text><text x="17.5" y="320.2" text-anchor="middle" font-size="12" fill="#111" font-family="Liberation Sans,sans-serif">16</text><text x="17.5" y="339.2" text-anchor="middle" font-size="12" fill="#111" font-family="Liberation Sans,sans-serif">17</text><text x="17.5" y="358.2" text-anchor="middle" font-size="12" fill="#111" font-family="Liberation Sans,sans-serif">18</text><text x="17.5" y="377.2" text-anchor="middle" font-size="12" fill="#111" font-family="Liberation Sans,sans-serif">19</text><text x="17.5" y="396.2" text-anchor="middle" font-size="12" fill="#111" font-family="Liberation Sans,sans-serif">20</text><text x="17.5" y="415.2" text-anchor="middle" font-size="12" fill="#111" font-family="Liberation Sans,sans-serif">21</text><text x="17.5" y="434.2" text-anchor="middle" font-size="12" fill="#111" font-family="Liberation Sans,sans-serif">22</text><text x="17.5" y="453.2" text-anchor="middle" font-size="12" fill="#111" font-family="Liberation Sans,sans-serif">23</text><text x="17.5" y="472.2" text-anchor="middle" font-size="12" fill="#111" font-family="Liberation Sans,sans-serif">24</text><text x="17.5" y="491.2" text-anchor="middle" font-size="12" fill="#111" font-family="Liberation Sans,sans-serif">25</text><text x="17.5" y="510.2" text-anchor="middle" font-size="12" fill="#111" font-family="Liberation Sans,sans-serif">26</text><text x="17.5" y="529.2" text-anchor="middle" font-size="12" fill="#111" font-family="Liberation Sans,sans-serif">27</text><text x="17.5" y="548.2" text-anchor="middle" font-size="12" fill="#111" font-family="Liberation Sans,sans-serif">28</text><rect x="11" y="10" width="2" height="2" fill="#a3a3a6"/><rect x="11" y="13.5" width="2" height="2" fill="#a3a3a6"/><rect x="11" y="17" width="2" height="2" fill="#a3a3a6"/><rect x="15" y="10" width="2" height="2" fill="#a3a3a6"/><rect x="15" y="13.5" width="2" height="2" fill="#a3a3a6"/><rect x="15" y="17" width="2" height="2" fill="#a3a3a6"/><rect x="19" y="10" width="2" height="2" fill="#a3a3a6"/><rect x="19" y="13.5" width="2" height="2" fill="#a3a3a6"/><rect x="19" y="17" width="2" height="2" fill="#a3a3a6"/></svg>
<div class="a" style="left:36px;top:208px;width:74px;height:20.5px;border:2px solid #2f7ef0"></div>
<div class="a" style="left:105px;top:224px;width:7px;height:7px;background:#2f7ef0;border:1px solid #fff"></div>
<div class="a" style="left:717px;top:186px;width:17px;height:556px;background:#f5f5f7"></div>
<div class="a" style="left:718px;top:186px;width:15px;height:17px;background:#fff"></div>
<svg style="left:720px;top:190px" width="12" height="7" viewBox="0 0 12 7" ><path d="M1.5 5.8L6 1.4L10.5 5.8" fill="none" stroke="#333" stroke-width="1.2"/></svg>
<div class="a" style="left:718px;top:203px;width:15px;height:502px;background:#e1e1e3"></div>
<div class="a" style="left:718px;top:726px;width:15px;height:15px;background:#fff"></div>
<svg style="left:720px;top:730px" width="12" height="7" viewBox="0 0 12 7" ><path d="M1.5 1.2L6 5.6L10.5 1.2" fill="none" stroke="#333" stroke-width="1.2"/></svg>
<div class="a" style="left:0px;top:741px;width:734px;height:17px;background:#f5f5f7"></div>
<div class="a" style="left:0px;top:742px;width:16px;height:16px;background:#fff"></div>
<svg style="left:4px;top:744px" width="7" height="12" viewBox="0 0 7 12" ><path d="M6 1.5L1.5 6L6 10.5" fill="none" stroke="#333" stroke-width="1.2"/></svg>
<div class="a" style="left:17px;top:742px;width:629px;height:15.5px;background:#e1e1e3"></div>
<div class="a" style="left:719px;top:742px;width:15px;height:16px;background:#fff"></div>
<svg style="left:723px;top:744px" width="7" height="12" viewBox="0 0 7 12" ><path d="M1 1.5L5.5 6L1 10.5" fill="none" stroke="#333" stroke-width="1.2"/></svg>
<div class="a" style="left:0px;top:758px;width:75px;height:18px;background:#fdfdfe"></div>
<svg style="left:11px;top:762.2px" width="7.9" height="7.6" viewBox="0 6 7.3 7" ><path d="M0 7.6C0 6.7 .7 6.2 1.6 6.2H2.2V8.9H3.9V10.3H2.2V13H0Z" fill="#0d54ad"/><path d="M3.1 6H7.3V13H5.1V7.9H3.1Z" fill="#2e9ae2"/></svg>
<div class="t" style="left:23.3px;top:757.6px;color:#55555a;font-size:12.2px;-webkit-text-stroke:0">sheet1</div>
<svg style="left:87px;top:761px" width="23" height="13" viewBox="0 0 23 13" ><path d="M.6 .6H21L18.4 11.2H.6Z" fill="#fff" stroke="#222" stroke-width="1.1"/><g transform="translate(3,-3.3)"><path d="M0 7.6C0 6.7 .7 6.2 1.6 6.2H2.2V8.9H3.9V10.3H2.2V13H0Z" fill="#0d54ad"/><path d="M3.1 6H7.3V13H5.1V7.9H3.1Z" fill="#2e9ae2"/></g><circle cx="17.6" cy="7.4" r="5.2" fill="#f5f5f7"/><circle cx="17.6" cy="7.4" r="4.4" fill="#1fb53c"/><path d="M17.6 4.8V10M15 7.4H20.2" stroke="#fff" stroke-width="1.5"/></svg>
<svg style="left:117px;top:761px" width="23" height="13" viewBox="0 0 23 13" ><path d="M.6 .6H21L18.4 11.2H.6Z" fill="#fff" stroke="#222" stroke-width="1.1"/><path d="M3.2 2.9H6.8V5H3.2ZM8.6 2.9H12.2V5H8.6ZM3.2 6.9H12.2V9.3H3.2Z" fill="none" stroke="#222" stroke-width="1.05"/><circle cx="17.6" cy="7.4" r="5.2" fill="#f5f5f7"/><circle cx="17.6" cy="7.4" r="4.4" fill="#1fb53c"/><path d="M17.6 4.8V10M15 7.4H20.2" stroke="#fff" stroke-width="1.5"/></svg>
<svg style="left:369px;top:764px" width="5" height="8" viewBox="0 0 5 8" ><path d="M5 0V8L0 4Z" fill="#a9a9ac"/></svg>
<svg style="left:396px;top:764px" width="5" height="8" viewBox="0 0 5 8" ><path d="M0 0V8L5 4Z" fill="#a9a9ac"/></svg>
<div class="a" style="left:416.5px;top:767.6px;width:10.5px;height:1.2px;background:#222"></div>
<div class="a" style="left:435px;top:768px;width:213px;height:1px;background:#d6d6d9"></div>
<div class="a" style="left:537px;top:762.5px;width:5px;height:12.5px;background:#2a2a2a;border-radius:2.2px"></div>
<svg style="left:662.5px;top:763.5px" width="10" height="10" viewBox="0 0 10 10" ><path d="M5 0V10M0 5H10" stroke="#222" stroke-width="1.2"/></svg>
<div class="a" style="left:680px;top:758px;width:35px;height:19px;background:#fff;border:1px solid #dedee1"></div>
<div class="t" style="left:684px;top:760px;color:#111;font-size:12px;letter-spacing:.4px">100</div>
<div class="t" style="left:720px;top:760px;color:#111;font-size:11px">%</div>
<!--/M2-->
</div>
<div class="a" id="side">
  <svg style="left:17px;top:12px" width="6" height="9" viewBox="0 0 6 9"><path d="M0 0V9L6 4.5Z" fill="#a9a9ac"/></svg>
  <div class="a" style="left:4px;top:29px;width:32px;height:28px;background:#f2f2f4"></div>
  <svg style="left:12px;top:35px" width="16" height="16" viewBox="0 0 16 16" fill="#419bf9"><path d="M0 1.5C0 .6 .6 0 1.5 0H10V10H0Z"/><path d="M11.2 0H14.5C15.4 0 16 .6 16 1.5V4.4H11.2Z"/><rect x="11.2" y="5.6" width="4.8" height="4.4"/><path d="M0 11.2H4.6V16H1.5C.6 16 0 15.4 0 14.5Z"/><rect x="5.7" y="11.2" width="4.6" height="4.8"/><path d="M11.4 11.2H16V14.5C16 15.4 15.4 16 14.5 16H11.4Z"/></svg>
  <!-- table info : abs x1046..1062 y93..108 -->
  <svg style="left:12px;top:67px" width="17" height="16" viewBox="0 0 17 16" fill="none" stroke="#4d4d57" stroke-width="2"><path d="M15 4.5V1H1V14.5H6"/><path d="M1 5H10M5 1V14.5" stroke-width="1.6"/><path d="M9 1V5M1 8.5H6M1 11.5H6" stroke-width="1" stroke="#8a8a93"/><circle cx="11.3" cy="10.8" r="4.7" fill="#4d4d57" stroke="none"/><path d="M11.3 7.6V9M11.3 10V13.6" stroke="#e8e8ea" stroke-width="1.7"/></svg>
  <!-- square : abs x1046..1062 y125..141 -->
  <svg style="left:12px;top:99px" width="16" height="16" viewBox="0 0 16 16" fill="none" stroke="#4d4d57" stroke-width="2"><rect x="2" y="2" width="12" height="12"/><path d="M0 2H3M13 2H16M0 14H3M13 14H16M2 0V3M14 0V3M2 13V16M14 13V16" stroke-width="1.6"/></svg>
  <!-- dropdown : abs x1046..1062 y159..171 -->
  <svg style="left:12px;top:133px" width="16" height="12" viewBox="0 0 16 12" fill="none" stroke="#4d4d57" stroke-width="2"><rect x="1" y="1" width="14" height="10"/><path d="M7.8 4H13L10.4 8Z" fill="#4d4d57" stroke="none"/></svg>
  <!-- bars : abs x1045..1063 y191..203 -->
  <svg style="left:11px;top:165px" width="18" height="12" viewBox="0 0 18 12" fill="none" stroke="#4d4d57" stroke-width="1.9"><rect x="5.5" y="1" width="11.5" height="3.8" rx="1.2"/><rect x="5.5" y="7.3" width="8.5" height="3.8" rx="1.2"/><path d="M2.8 2.5H.8V9.5H2.8" stroke-width="1.1"/></svg>
  <!-- link : abs x1046..1062 y222..237 -->
  <svg style="left:12px;top:196px" width="16" height="16" viewBox="0 0 16 16" fill="none" stroke="#4d4d57" stroke-width="2.1" stroke-linecap="round"><path d="M8.8 6.2L6.3 3.2C4.8 1.5 1.8 2 1.6 4.6C1.5 5.6 2 6.2 2.6 6.8L5.2 9.4C6.2 10.3 7.4 10.2 8.2 9.6"/><path d="M7.2 9.8L9.7 12.8C11.2 14.5 14.2 14 14.4 11.4C14.5 10.4 14 9.8 13.4 9.2L10.8 6.6C9.8 5.7 8.6 5.8 7.8 6.4"/></svg>
  <!-- import doc : abs x1045..1063 y252..270 -->
  <svg style="left:11px;top:226px" width="18" height="18" viewBox="0 0 18 18" fill="none" stroke="#4d4d57" stroke-width="2"><path d="M3.5 6.5V1H11.5L17 6.5V17H3.5V13.5"/><path d="M11.5 1V6.5H17Z" fill="#4d4d57" stroke-width="1"/><path d="M0 10.2H9.5" /><path d="M7 6.8L10.5 10.2L7 13.6Z" fill="#4d4d57" stroke="none"/></svg>
  <!-- table-ish : abs x1046..1062 y285..301 -->
  <svg style="left:12px;top:259px" width="16" height="16" viewBox="0 0 16 16" fill="none" stroke="#4d4d57" stroke-width="2"><path d="M16 1H1V16"/><path d="M1 11H16M12 1V11"/><path d="M6 11V15.5M11 11V15.5M12 6H16" stroke-width="1.6"/></svg>
</div>

<div class="a" id="redge" style="left:1073.5px;top:52px;width:1.5px;height:750px;background:#f5f5f7"></div>
<div class="a" id="menu">
  <div class="a" style="left:32px;top:4px;width:153px;height:23px;background:#419bf9;border-radius:3px"></div>
  <div class="mi" style="top:4px;color:#fff">
    <svg style="left:11.1px;top:3.6px" width="12.8" height="12.8" viewBox="0 0 13 13"><path d="M.55 .55H12.45V12.45H8.3V4.4H.55Z" fill="#fff" stroke="#2a2a2a" stroke-width="1.1"/><path d="M4.4 .55V4.4M8.3 .55V4.4M8.3 4.4H12.45M8.3 8.3H12.45" fill="none" stroke="#2a2a2a" stroke-width="1.1"/><path d="M0 7.6C0 6.7 .7 6.2 1.6 6.2H2.2V8.9H3.9V10.3H2.2V13H0Z" fill="#0d54ad"/><path d="M3.1 6H7.3V13H5.1V7.9H3.1Z" fill="#2e9ae2"/></svg>
    <span class="t">新增普通報表(N)</span><span class="t k" style="color:#111">Ctrl-N</span></div>
  <div class="mi" style="top:27px">
    <svg style="left:10px;top:3px" width="16" height="16" viewBox="0 0 16 16" fill="none" stroke="#222" stroke-width="1.2"><path d="M1.5 2.4C5 3.7 11 3.7 14.5 2.4V11.8C11 10.6 5 10.6 1.5 11.8Z"/><path d="M2.5 13.8H13.5"/><path d="M4 9.2V7.2H6V5.8H7.6V7.2H9.2V6.4H11.6V9.2Z" fill="#808083" stroke="none"/></svg>
    <span class="t">建立視覺化看板(B)</span><span class="t k">Ctrl-B</span></div>
  <div class="mi" style="top:50px">
    <svg style="left:9.4px;top:2.6px" width="16" height="16" viewBox="0 0 16 16" fill="none" stroke="#222" stroke-width="1.15"><path d="M1.2 .9H11.3L14.9 4.5V15.6H1.2Z"/><rect x="4.2" y="5.4" width="2.7" height="2.7" stroke-width="1"/><circle cx="10.4" cy="6.75" r="1.5" stroke-width="1"/><rect x="4.2" y="10.2" width="2.7" height="2.7" stroke-width="1"/><rect x="9" y="10.2" width="2.7" height="2.7" stroke-width="1"/></svg>
    <span class="t">建立其他範本</span><i class="ar"></i></div>
  <div class="mi" style="top:73px">
    <svg style="left:9.3px;top:3px" width="16" height="16" viewBox="0 0 16 16" fill="none" stroke="#222" stroke-width="1.15" stroke-linejoin="round"><path d="M1.3 13.4V2.6H6.4L7.8 4.2H13.7V6.6"/><path d="M1.3 13.4L3.6 7.2H15.6L13.2 13.4Z"/></svg>
    <span class="t">開啟(O)</span><span class="t k">Ctrl-O</span></div>
  <div class="mi" style="top:96px"><span class="t">開啟最近使用檔(E)</span><i class="ar"></i></div>
  <div class="mi" style="top:119px"><span class="t">關閉(W)</span><span class="t k">Ctrl-W</span></div>
  <div class="sep" style="top:143px"></div>
  <div class="mi dis" style="top:144px">
    <svg style="left:10px;top:3px" width="16" height="16" viewBox="0 0 16 16" fill="none" stroke="#b4b4b7" stroke-width="1.3"><rect x="1.6" y="1.6" width="12.8" height="12.8" rx="1.2"/><path d="M4.5 1.6V6H11V1.6" /><rect x="8" y="2.2" width="2.2" height="3" fill="#b4b4b7" stroke="none"/></svg>
    <span class="t">儲存(S)</span><span class="t k">Ctrl-S</span></div>
  <div class="mi" style="top:167px">
    <svg style="left:10px;top:3px" width="17" height="17" viewBox="0 0 17 17" fill="none" stroke="#222" stroke-width="1.3"><path d="M1.6 1.6H12.4V11.4H1.6Z"/><path d="M4 1.6V5H9.5V1.6"/><rect x="6.8" y="2" width="2" height="2.6" fill="#222" stroke="none"/><path d="M7.5 14.5H9M10.5 14.5H12M13.5 14.5H15" stroke-width="1.6"/></svg>
    <span class="t">另存為(A)...</span></div>
  <div class="mi dis" style="top:190px">
    <svg style="left:10px;top:2.5px" width="16.5" height="14.5" viewBox="0 0 16.5 14"><path d="M7 0V3.6C12.5 3.6 16.3 6.8 16.3 14C14.6 10 11.5 8.8 7 8.8V12.6L0 6.3Z" fill="#b4b4b7"/></svg>
    <span class="t">復原(U)</span><span class="t k">Ctrl-Z</span></div>
  <div class="mi dis" style="top:213px">
    <svg style="left:10px;top:2.5px" width="16.5" height="14.5" viewBox="0 0 16.5 14"><path d="M9.3 0V3.6C3.8 3.6 0 6.8 0 14C1.7 10 4.8 8.8 9.3 8.8V12.6L16.3 6.3Z" fill="#b4b4b7"/></svg>
    <span class="t">取消復原(R)</span><span class="t k">Ctrl-Y</span></div>
  <div class="mi" style="top:236px">
    <svg style="left:10px;top:3px" width="16" height="16" viewBox="0 0 16 16" fill="none" stroke="#222" stroke-width="1.1"><path d="M14.4 8.5V14.8H5L1.6 11.5V1.2H14.4V2.5"/><path d="M1.6 11.5H5V14.8"/><path d="M6 5.2H10.5V3L14.8 6.3L10.5 9.6V7.4H6Z" fill="#2db34a" stroke="none"/></svg>
    <span class="t">匯出</span><i class="ar"></i></div>
  <div class="sep" style="top:260px"></div>
  <div class="mi" style="top:261px"><span class="t">選項(P)...</span></div>
  <div class="mi" style="top:284px">
    <svg style="left:10px;top:3px" width="16" height="16" viewBox="0 0 16 16" fill="none" stroke="#333" stroke-width="1.5" stroke-linejoin="round"><path d="M1 4.5H4C7 4.5 7.5 11.5 10.5 11.5H13"/><path d="M1 11.5H4C5 11.5 5.6 10.8 6.2 9.8M8.2 6.2C8.8 5.2 9.5 4.5 10.5 4.5H13"/><path d="M12 2.2L14.8 4.5L12 6.8Z M12 9.2L14.8 11.5L12 13.8Z" fill="#333" stroke-width=".6"/></svg>
    <span class="t">切換工作區間</span><i class="ar"></i></div>
  <div class="mi" style="top:307px"><span class="t">退離(X)</span></div>
</div>

<div class="a" style="left:-0.5px;top:2px;width:52.5px;height:26px;border:3px solid #f94144"></div>
<div class="a" style="left:53px;top:2px;width:25.5px;height:27px;border-radius:50%;background:#f94144"></div>
<div class="t" style="left:52.5px;top:2.5px;width:26px;height:26px;line-height:26px;text-align:center;color:#fff;font-size:21px">1</div>
<div class="a" style="left:29px;top:33px;width:132px;height:27px;border:3px solid #f94144"></div>
<div class="a" style="left:168.7px;top:31px;width:25.6px;height:27px;border-radius:50%;background:#f94144"></div>
<div class="t" style="left:168.5px;top:31.5px;width:26px;height:26px;line-height:26px;text-align:center;color:#fff;font-size:21px">2</div>

</body>
</html>
